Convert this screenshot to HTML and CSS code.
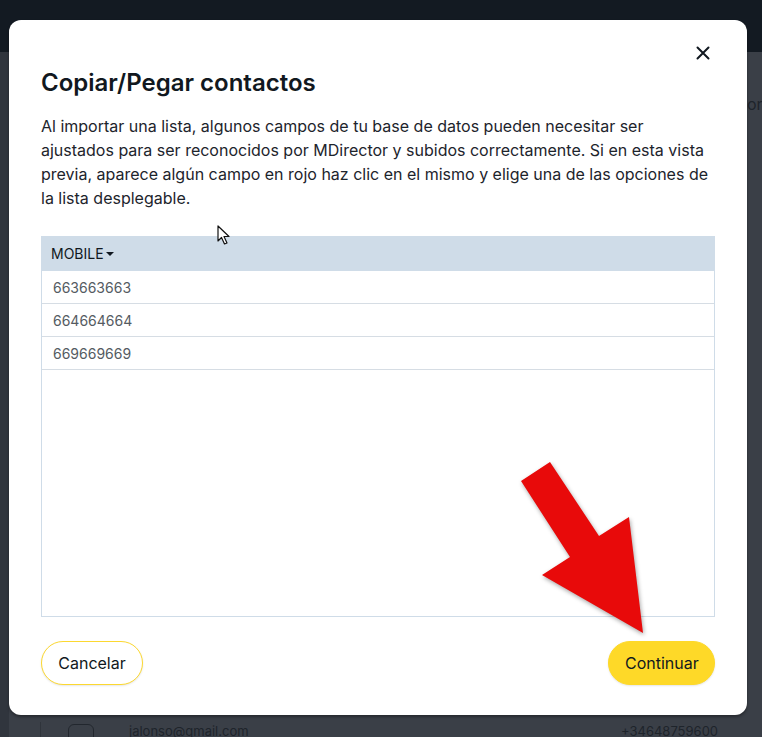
FILE: index.html
```html
<!DOCTYPE html>
<html lang="es">
<head>
<meta charset="utf-8">
<link rel="stylesheet" href="styles.css">
</head>
<body>
<div class="page">
  <div class="topbar"></div>
  <div class="content">
    <div class="side"></div>
    <div class="main">
      <div class="bg-head">or</div>
      <div class="bg-row">
        <span class="bg-check"></span>
        <span class="bg-mail">jalonso@gmail.com</span>
        <span class="bg-phone">+34648759600</span>
      </div>
    </div>
  </div>
</div>

<div class="modal">
  <button class="close" aria-label="Cerrar">
    <svg width="14" height="14" viewBox="0 0 14 14"><path d="M1.5 1.5L12.5 12.5M12.5 1.5L1.5 12.5" stroke="#111820" stroke-width="2" stroke-linecap="round"/></svg>
  </button>
  <h2 class="title">Copiar/Pegar contactos</h2>
  <p class="desc">Al importar una lista, algunos campos de tu base de datos pueden necesitar ser ajustados para ser reconocidos por MDirector y subidos correctamente. Si en esta vista previa, aparece algún campo en rojo haz clic en el mismo y elige una de las opciones de la lista desplegable.</p>
  <div class="table">
    <div class="thead">MOBILE<span class="caret"></span></div>
    <div class="row">663663663</div>
    <div class="row">664664664</div>
    <div class="row">669669669</div>
  </div>
  <div class="actions">
    <button class="btn btn-outline">Cancelar</button>
    <button class="btn btn-primary">Continuar</button>
  </div>
</div>

<svg class="arrow" width="762" height="737" viewBox="0 0 762 737">
  <polygon points="521,481 550,462 599,536 629,517 643,633 542,575 570,557" fill="#e80a0a"/>
</svg>

<svg class="cursor" width="16" height="22" viewBox="0 0 16 22">
  <path d="M1 1 L1 16 L4.5 12.5 L7.5 19 L10 18 L7 11.5 L12 11.5 Z" fill="#fff" stroke="#111" stroke-width="1.2" stroke-linejoin="round"/>
</svg>
</body>
</html>
```
FILE: styles.css
```css
* { box-sizing: border-box; }
html, body { margin: 0; padding: 0; }
body {
  width: 762px;
  height: 737px;
  overflow: hidden;
  font-family: Inter, "Liberation Sans", sans-serif;
  background: #3a3f47;
  position: relative;
}
.page { display: flex; flex-direction: column; height: 737px; }
.topbar { height: 52px; background: #131a22; flex: none; }
.content { flex: 1; display: flex; }
.side { width: 9px; background: #30353d; }
.main { flex: 1; position: relative; }
.bg-head {
  position: absolute; left: 738px; top: 42px;
  font-size: 16px; color: #1e242b;
}
.bg-row { position: absolute; left: 0; top: 670px; width: 753px; height: 30px; border-left: 1px solid #2f343b; margin-left: 31px; }
.bg-check { position: absolute; left: 27px; top: 2px; width: 26px; height: 26px; border: 1px solid #22272e; border-radius: 6px; }
.bg-mail { position: absolute; left: 88px; top: 1px; font-size: 13px; color: #1e242b; }
.bg-phone { position: absolute; left: 580px; top: 1px; font-size: 13px; color: #1e242b; }

.modal {
  position: absolute;
  left: 9px; top: 20px;
  width: 738px; height: 695px;
  background: #fff;
  border-radius: 12px;
  box-shadow: 0 2px 3px rgba(0,0,0,0.35);
  padding: 49px 32px 30px 32px;
  display: flex; flex-direction: column;
}
.close {
  position: absolute; right: 37px; top: 26px;
  width: 14px; height: 14px; padding: 0; border: 0; background: none;
  display: flex;
}
.title {
  margin: 0;
  font-size: 24px; line-height: 28px; font-weight: 600;
  color: #111820;
}
.desc {
  margin: 17px 0 0 0;
  font-size: 16px; line-height: 24px;
  color: #1d242c;
}
.table {
  margin-top: 26px;
  height: 381px;
  border: 1px solid #cfdce8;
  border-top: 0;
}
.thead {
  height: 35px;
  background: #cfdce8;
  display: flex; align-items: center;
  padding-left: 9px;
  font-size: 14px; font-weight: 400; color: #111820;
}
.caret {
  margin-left: 2px;
  width: 0; height: 0;
  border-left: 4px solid transparent;
  border-right: 4px solid transparent;
  border-top: 4px solid #111820;
}
.row {
  height: 33px;
  border-bottom: 1px solid #d6dde4;
  display: flex; align-items: center;
  padding-left: 11px;
  font-size: 14px; color: #555b62;
}
.actions {
  margin-top: 24px;
  display: flex; justify-content: space-between;
}
.btn {
  height: 44px; border-radius: 22px;
  font-family: inherit; font-size: 16px; color: #111820;
  padding: 0 16px;
  cursor: pointer;
}
.btn-outline { width: 102px; background: #fff; border: 1px solid #fcd830; box-shadow: 0 1px 2px rgba(0,0,0,0.1); }
.btn-primary { width: 107px; background: #fed928; border: 1px solid #fed928; box-shadow: 0 1px 2px rgba(0,0,0,0.1); }

.arrow {
  position: absolute; left: 0; top: 0;
  pointer-events: none;
  filter: drop-shadow(1px 2px 2px rgba(0,0,0,0.35));
}
.cursor { position: absolute; left: 217px; top: 225px; }
```
